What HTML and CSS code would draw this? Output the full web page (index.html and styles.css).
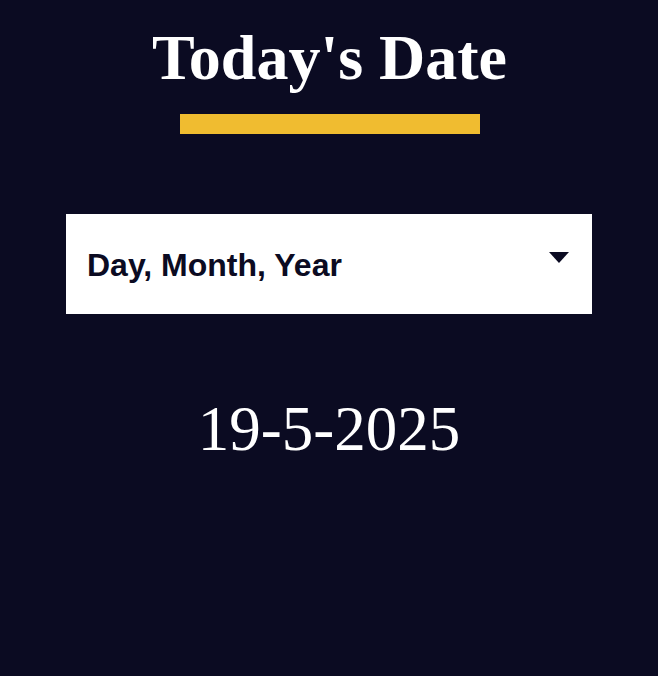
FILE: index.html
```html
<!DOCTYPE html>
<html>
<head>
<meta charset="utf-8">
<link rel="stylesheet" href="styles.css">
</head>
<body>
<main class="page">
  <h1 class="title">Today's Date</h1>
  <div class="underline"></div>
  <div class="select">
    <span class="select-label">Day, Month, Year</span>
    <span class="select-arrow"></span>
  </div>
  <div class="date">19-5-2025</div>
</main>
</body>
</html>
```
FILE: styles.css
```css
html, body {
  margin: 0;
  padding: 0;
  background: #0b0b22;
  height: 100%;
}
.page {
  display: flex;
  flex-direction: column;
  align-items: center;
  padding-top: 20px;
}
.title {
  margin: 0 0 0 1px;
  font-family: "Liberation Serif", "Times New Roman", serif;
  font-weight: bold;
  font-size: 64px;
  line-height: 76px;
  color: #ffffff;
}
.underline {
  width: 300px;
  height: 20px;
  background: #f0bc30;
  margin: 18px 0 0 2px;
}
.select {
  box-sizing: border-box;
  width: 526px;
  height: 100px;
  margin-top: 80px;
  background: #ffffff;
  display: flex;
  align-items: center;
  justify-content: space-between;
  padding: 0 23px 0 21px;
}
.select-label {
  font-family: "Liberation Sans", Arial, sans-serif;
  font-weight: bold;
  font-size: 32px;
  color: #0b0b22;
  margin-top: 2px;
}
.select-arrow {
  width: 0;
  height: 0;
  border-left: 10px solid transparent;
  border-right: 10px solid transparent;
  border-top: 11px solid #0b0b22;
  align-self: flex-start;
  margin-top: 38px;
}
.date {
  margin-top: 80px;
  font-family: "Liberation Serif", "Times New Roman", serif;
  font-size: 63px;
  line-height: 70px;
  color: #ffffff;
}
```
